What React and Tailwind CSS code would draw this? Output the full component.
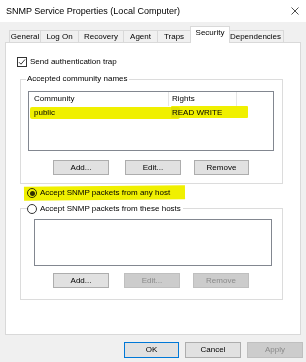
import React from "react";

const font = { fontFamily: '"Liberation Sans", Arial, sans-serif' };

function Btn({ children, w = "w-[56px]", disabled, primary, className = "" }) {
  const base = "h-[15px] flex items-center justify-center text-[8px] leading-none border";
  const look = disabled
    ? "bg-[#cccccc] border-[#bfbfbf] text-[#8a8a8a]"
    : primary
    ? "bg-[#e1e1e1] border-[#0078d7] text-black"
    : "bg-[#e1e1e1] border-[#adadad] text-black";
  return <div className={`${base} ${look} ${w} ${className}`}>{children}</div>;
}

function Radio({ checked }) {
  return (
    <div className="w-[10px] h-[10px] rounded-full border border-[#333] bg-white flex items-center justify-center">
      {checked && <div className="w-[5px] h-[5px] rounded-full bg-[#333]" />}
    </div>
  );
}

function Tab({ label, w, selected }) {
  if (selected) {
    return (
      <div className={`${w} h-[17px] -ml-px -mr-[2px] bg-white border border-b-0 border-[#d9d9d9] flex items-start justify-center pt-[2px] text-[8px] leading-none relative z-10`}>
        {label}
      </div>
    );
  }
  return (
    <div className={`${w} h-[12px] -ml-px mb-px bg-[#f0f0f0] border border-b-0 border-[#d9d9d9] flex items-center justify-center text-[8px] leading-none`}>
      {label}
    </div>
  );
}

export default function App() {
  return (
    <div style={font} className="w-[306px] h-[362px] bg-[#f0f0f0] flex flex-col text-black overflow-hidden">
      {/* Title bar */}
      <div className="h-[22px] bg-white flex items-center justify-between pl-[6px] pr-[6px]">
        <span className="text-[9px] leading-none">SNMP Service Properties (Local Computer)</span>
        <svg width="8" height="8" viewBox="0 0 8 8" className="mr-[1px]">
          <path d="M0.5 0.5 L7.5 7.5 M7.5 0.5 L0.5 7.5" stroke="#222" strokeWidth="0.8" fill="none" />
        </svg>
      </div>

      {/* Tabs */}
      <div className="mt-[5px] h-[16px] -mb-px pl-[10px] flex items-end relative z-10">
        <Tab label="General" w="w-[32px]" />
        <Tab label="Log On" w="w-[39px]" />
        <Tab label="Recovery" w="w-[46px]" />
        <Tab label="Agent" w="w-[35px]" />
        <Tab label="Traps" w="w-[34px]" />
        <Tab label="Security" w="w-[40px]" selected />
        <Tab label="Dependencies" w="w-[57px]" />
      </div>

      {/* Panel */}
      <div className="mx-[5px] h-[293px] border border-[#d9d9d9] bg-white flex flex-col pt-[14px] pl-[11px]">
        {/* Checkbox */}
        <div className="flex items-center h-[10px] gap-[3px] text-[8px] leading-none">
          <div className="w-[10px] h-[10px] border border-[#333] bg-white flex items-center justify-center">
            <svg width="8" height="8" viewBox="0 0 8 8">
              <path d="M1 4.2 L3 6.2 L7 1.5" stroke="#222" strokeWidth="0.9" fill="none" />
            </svg>
          </div>
          <span>Send authentication trap</span>
        </div>

        {/* Group 1 */}
        <div className="mt-[12px] ml-[3px] w-[263px] border border-[#dcdcdc] relative pt-[11px] pb-[8px]">
          <span className="absolute -top-[5px] left-[5px] bg-white px-px text-[8px] leading-none">
            Accepted community names
          </span>
          <div className="ml-[7px] w-[246px] h-[60px] border border-[#828790] bg-white relative">
            <div className="h-[14px] flex text-[8px] leading-none">
              <div className="w-[140px] pl-[5px] flex items-center border-r border-[#e5e5e5]">Community</div>
              <div className="w-[68px] pl-[3px] flex items-center border-r border-[#e5e5e5]">Rights</div>
            </div>
            <div className="h-[14px] flex text-[8px] leading-none relative">
              <div className="absolute left-[1px] top-[1px] w-[150px] h-[12px] bg-[#f0f000] rounded-[2px] mix-blend-multiply" />
              <div className="absolute left-[142px] top-0 w-[77px] h-[12px] bg-[#f0f000] rounded-[1px] mix-blend-multiply" />
              <div className="w-[140px] pl-[5px] flex items-center relative">public</div>
              <div className="w-[68px] pl-[3px] flex items-center relative">READ WRITE</div>
            </div>
          </div>
          <div className="mt-[9px] flex pl-[32px]">
            <Btn>Add...</Btn>
            <Btn className="ml-[16px]">Edit...</Btn>
            <Btn className="ml-[13px]" w="w-[55px]">Remove</Btn>
          </div>
        </div>

        {/* Radio 1 */}
        <div className="mt-[4px] ml-[10px] h-[10px] flex items-center gap-[3px] text-[8px] leading-none relative">
          <div className="absolute -left-[3px] -top-[2px] w-[161px] h-[14px] bg-[#f0f000] -rotate-[0.5deg] mix-blend-multiply" />
          <Radio checked />
          <span className="relative">Accept SNMP packets from any host</span>
        </div>

        {/* Group 2 */}
        <div className="mt-[10px] ml-[3px] w-[263px] h-[92px] border border-[#dcdcdc] relative pt-[10px]">
          <div className="absolute -top-[6px] left-[6px] bg-white pr-[2px] h-[11px] flex items-center gap-[3px] text-[8px] leading-none">
            <Radio />
            <span>Accept SNMP packets from these hosts</span>
          </div>
          <div className="ml-[13px] w-[238px] h-[47px] border border-[#828790] bg-white" />
          <div className="mt-[7px] flex pl-[32px]">
            <Btn>Add...</Btn>
            <Btn className="ml-[15px]" disabled>Edit...</Btn>
            <Btn className="ml-[13px]" disabled>Remove</Btn>
          </div>
        </div>
      </div>

      {/* Bottom buttons */}
      <div className="mt-[7px] flex justify-end pr-[3px] gap-[6px]">
        <Btn primary w="w-[55px]" className="h-[16px]">OK</Btn>
        <Btn className="h-[16px]">Cancel</Btn>
        <Btn disabled className="h-[16px]">Apply</Btn>
      </div>
    </div>
  );
}
